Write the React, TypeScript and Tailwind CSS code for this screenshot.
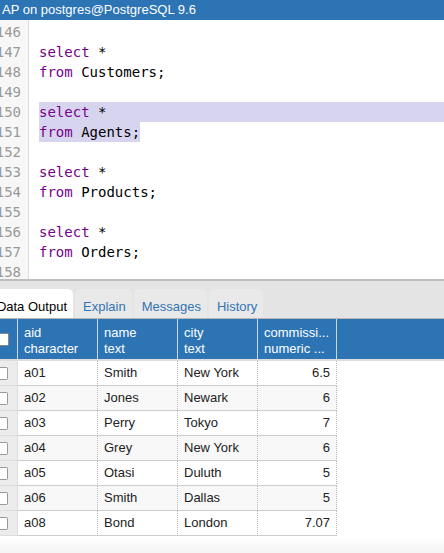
import React from "react";

const lines: { n: number; kw?: string; rest?: string; hl?: "full" | "text" }[] = [
  { n: 46 },
  { n: 47, kw: "select", rest: " *" },
  { n: 48, kw: "from", rest: " Customers;" },
  { n: 49 },
  { n: 50, kw: "select", rest: " *", hl: "full" },
  { n: 51, kw: "from", rest: " Agents;", hl: "text" },
  { n: 52 },
  { n: 53, kw: "select", rest: " *" },
  { n: 54, kw: "from", rest: " Products;" },
  { n: 55 },
  { n: 56, kw: "select", rest: " *" },
  { n: 57, kw: "from", rest: " Orders;" },
  { n: 58 },
];

const rows = [
  ["a01", "Smith", "New York", "6.5"],
  ["a02", "Jones", "Newark", "6"],
  ["a03", "Perry", "Tokyo", "7"],
  ["a04", "Grey", "New York", "6"],
  ["a05", "Otasi", "Duluth", "5"],
  ["a06", "Smith", "Dallas", "5"],
  ["a08", "Bond", "London", "7.07"],
];

const sans = { fontFamily: '"Liberation Sans", Arial, sans-serif' };
const mono = { fontFamily: '"DejaVu Sans Mono", monospace' };

export default function App() {
  return (
    <div className="w-[444px] h-[553px] overflow-hidden bg-[#f7f7f7] flex flex-col" style={sans}>
      <div className="h-[20px] bg-[#2c74b4] text-white text-[13px] leading-[20px] pl-[2px] whitespace-nowrap">
        AP on postgres@PostgreSQL 9.6
      </div>
      <div className="h-[259px] bg-white flex overflow-hidden">
        <div className="w-[29px] shrink-0 bg-[#f7f7f7] border-r border-[#dddddd] pt-[2px] overflow-hidden">
          {lines.map((l) => (
            <div key={l.n} className="h-[20px] leading-[20px] flex justify-end pr-[7px] text-[#999999] text-[14px] whitespace-nowrap" style={mono}>
              1{l.n}
            </div>
          ))}
        </div>
        <div className="flex-1 pt-[2px] pl-[10px]" style={mono}>
          {lines.map((l) => (
            <div
              key={l.n}
              className={`h-[20px] leading-[20px] text-[14px] whitespace-pre text-black ${l.hl === "full" ? "bg-[#d7d4f0]" : ""}`}
            >
              <span className={l.hl === "text" ? "bg-[#d7d4f0] inline-block h-[20px]" : ""}>
                <span className="text-[#770088]">{l.kw ?? ""}</span>
                {l.rest ?? ""}
              </span>
            </div>
          ))}
        </div>
      </div>
      <div className="h-[2px] bg-[#bdbdbd]" />
      <div className="h-[38px] bg-[#e4e4e4] flex items-end gap-[2px] border-b border-[#b5b5b5]">
        <div className="h-[29px] w-[73px] bg-white rounded-tr-[5px] text-[13px] leading-[35px] text-black whitespace-nowrap overflow-hidden flex justify-end pr-[6px]">
          Data Output
        </div>
        <div className="h-[29px] pl-[8px] pr-[6px] bg-[#e9e9e9] rounded-t-[5px] text-[13px] leading-[35px] text-[#3374b5]">Explain</div>
        <div className="h-[29px] pl-[8px] pr-[6px] bg-[#e9e9e9] rounded-t-[5px] text-[13px] leading-[35px] text-[#3374b5]">Messages</div>
        <div className="h-[29px] pl-[8px] pr-[6px] bg-[#e9e9e9] rounded-t-[5px] text-[13px] leading-[35px] text-[#3374b5]">History</div>
      </div>
      <div className="bg-white">
        <div className="flex h-[42px] bg-[#2c74b4] text-white text-[13px] leading-[16px] border-b-2 border-[#dddddd]">
          <div className="w-[18px] shrink-0 border-r border-[#c8d8e8] flex items-center">
            <div className="w-[9px] h-[13px] bg-white border border-[#888] border-l-0 rounded-r-[2px]" />
          </div>
          {[
            ["aid", "character"],
            ["name", "text"],
            ["city", "text"],
            ["commissi...", "numeric ..."],
          ].map(([a, b], i) => (
            <div key={i} className={`shrink-0 border-r border-[#c8d8e8] pl-[6px] pt-[6px] ${i === 3 ? "w-[79px]" : "w-[80px]"}`}>
              <div>{a}</div>
              <div>{b}</div>
            </div>
          ))}
          <div className="flex-1" />
        </div>
        {rows.map((r, i) => (
          <div key={i} className={`flex h-[25px] text-[13px] leading-[23px] text-[#222] ${i % 2 === 1 ? "bg-[#f8f8f8]" : "bg-white"}`}>
            <div className="w-[18px] shrink-0 bg-[#ececec] border-b border-[#cccccc] border-r border-[#dddddd] flex items-center">
              <div className="w-[8px] h-[13px] bg-white border border-[#999] border-l-0 rounded-r-[2px]" />
            </div>
            <div className="w-[80px] shrink-0 border-b border-[#cccccc] border-r border-r-[#bbbbbb] border-dotted pl-[6px]" style={{ borderBottomStyle: "solid" }}>{r[0]}</div>
            <div className="w-[80px] shrink-0 border-b border-[#cccccc] border-r border-r-[#bbbbbb] border-dotted pl-[6px]" style={{ borderBottomStyle: "solid" }}>{r[1]}</div>
            <div className="w-[80px] shrink-0 border-b border-[#cccccc] border-r border-r-[#bbbbbb] border-dotted pl-[6px]" style={{ borderBottomStyle: "solid" }}>{r[2]}</div>
            <div className="w-[79px] shrink-0 border-b border-[#cccccc] border-r border-r-[#bbbbbb] border-dotted pr-[6px] text-right" style={{ borderBottomStyle: "solid" }}>{r[3]}</div>
            <div className="flex-1 bg-white" />
          </div>
        ))}
      </div>
      <div className="flex-1 bg-gradient-to-b from-white to-[#f4f4f4]" />
    </div>
  );
}
